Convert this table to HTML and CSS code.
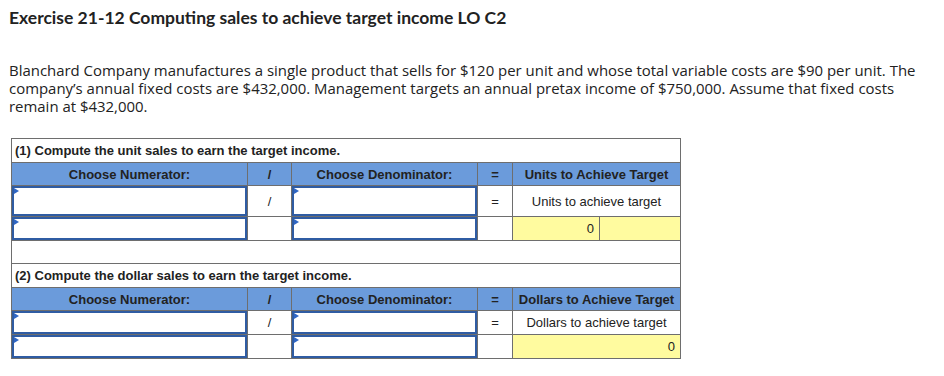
FILE: index.html
```html
<!DOCTYPE html>
<html>
<head>
<meta charset="utf-8">
<link rel="stylesheet" href="styles.css">
</head>
<body>
<div class="page">
  <h1 class="title">Exercise 21-12 Computing sales to achieve target income LO C2</h1>
  <p class="intro">Blanchard Company manufactures a single product that sells for $120 per unit and whose total variable costs are $90 per unit. The company’s annual fixed costs are $432,000. Management targets an annual pretax income of $750,000. Assume that fixed costs remain at $432,000.</p>
  <table class="calc">
    <colgroup>
      <col class="c-num"><col class="c-div"><col class="c-den"><col class="c-eq"><col class="c-res1"><col class="c-res2">
    </colgroup>
    <tr class="r-title"><td colspan="6">(1) Compute the unit sales to earn the target income.</td></tr>
    <tr class="r-head">
      <th>Choose Numerator:</th><th>/</th><th>Choose Denominator:</th><th>=</th><th colspan="2">Units to Achieve Target</th>
    </tr>
    <tr class="r-in r-tall">
      <td class="in-cell"><div class="inp"><span class="tri"></span></div></td>
      <td class="sym">/</td>
      <td class="in-cell"><div class="inp"><span class="tri"></span></div></td>
      <td class="sym">=</td>
      <td class="lbl" colspan="2">Units to achieve target</td>
    </tr>
    <tr class="r-in">
      <td class="in-cell"><div class="inp"><span class="tri"></span></div></td>
      <td></td>
      <td class="in-cell"><div class="inp"><span class="tri"></span></div></td>
      <td></td>
      <td class="res">0</td>
      <td class="res"></td>
    </tr>
    <tr class="r-gap"><td colspan="6"></td></tr>
    <tr class="r-title"><td colspan="6">(2) Compute the dollar sales to earn the target income.</td></tr>
    <tr class="r-head">
      <th>Choose Numerator:</th><th>/</th><th>Choose Denominator:</th><th>=</th><th colspan="2">Dollars to Achieve Target</th>
    </tr>
    <tr class="r-in">
      <td class="in-cell"><div class="inp"><span class="tri"></span></div></td>
      <td class="sym">/</td>
      <td class="in-cell"><div class="inp"><span class="tri"></span></div></td>
      <td class="sym">=</td>
      <td class="lbl" colspan="2">Dollars to achieve target</td>
    </tr>
    <tr class="r-in">
      <td class="in-cell"><div class="inp"><span class="tri"></span></div></td>
      <td></td>
      <td class="in-cell"><div class="inp"><span class="tri"></span></div></td>
      <td></td>
      <td class="res" colspan="2">0</td>
    </tr>
  </table>
</div>
</body>
</html>
```
FILE: styles.css
```css
html, body {
  margin: 0;
  padding: 0;
  background: #ffffff;
}
.page {
  padding: 6px 9px 0 9px;
  color: #222;
}
.title {
  font-family: "Lato", "Open Sans", sans-serif;
  font-weight: 700;
  font-size: 17.5px;
  line-height: 24px;
  margin: 0;
  color: #222;
}
.intro {
  font-family: "Open Sans", "Lato", sans-serif;
  font-size: 14.95px;
  line-height: 18px;
  margin: 31px 0 23px 0;
  color: #222;
}
.calc {
  border-collapse: collapse;
  table-layout: fixed;
  width: 669px;
  margin-left: 2px;
  font-family: "Liberation Sans", Arial, sans-serif;
  font-size: 13px;
  color: #222;
}
.c-num { width: 236px; }
.c-div { width: 44px; }
.c-den { width: 186px; }
.c-eq { width: 35px; }
.c-res1 { width: 87px; }
.c-res2 { width: 81px; }
.calc td, .calc th {
  border: 1px solid #6e6e6e;
  padding: 0;
}
.r-title td {
  height: 23px;
  font-weight: 700;
  padding: 0 3px;
  text-align: left;
}
.r-head th {
  height: 22px;
  background: #6b9bdb;
  font-weight: 700;
  text-align: center;
}
.r-in td {
  height: 23px;
}
.r-in.r-tall td {
  height: 30px;
}
.r-gap td {
  height: 22px;
}
.in-cell {
  padding: 0;
  vertical-align: top;
}
.inp {
  position: relative;
  box-sizing: border-box;
  height: 100%;
  min-height: 23px;
  border: 2px solid #2f5ca3;
  background: #fff;
}
.r-tall .inp {
  min-height: 30px;
}
.tri {
  position: absolute;
  left: 0;
  top: 0;
  width: 0;
  height: 0;
  border-top: 3px solid transparent;
  border-bottom: 3px solid transparent;
  border-left: 5px solid #2f66c4;
}
.sym {
  text-align: center;
}
.lbl {
  text-align: center;
}
.calc td.res {
  background: #fffb9f;
  text-align: right;
  padding-right: 5px;
}
```
